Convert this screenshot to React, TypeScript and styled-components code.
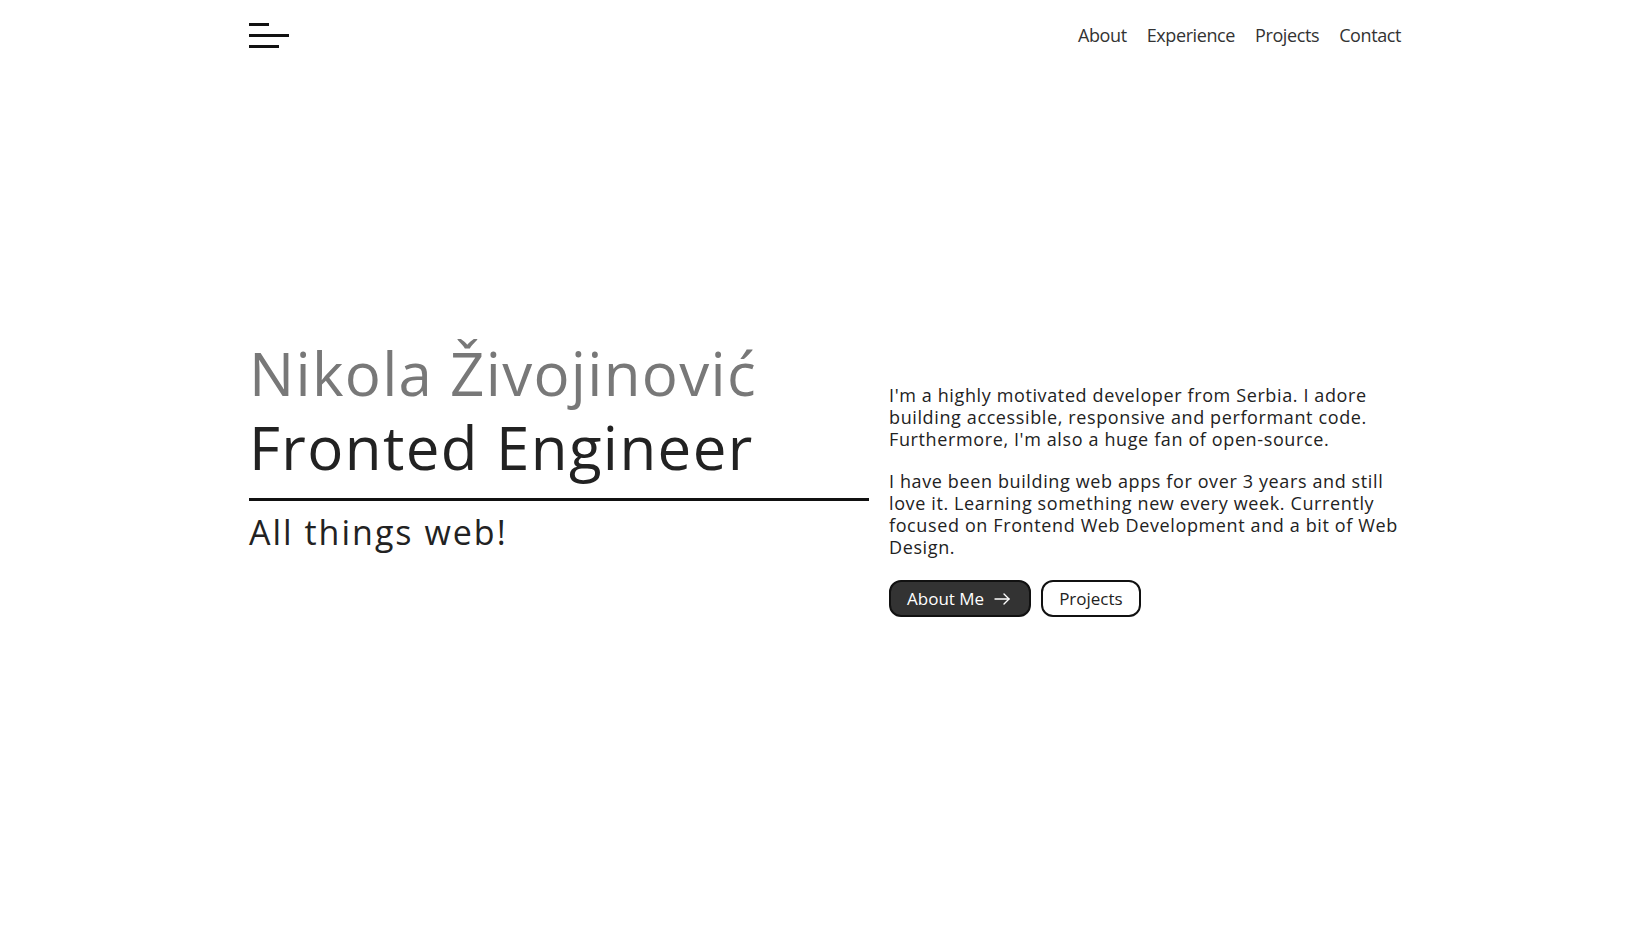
import styled, { createGlobalStyle } from 'styled-components';

const GlobalStyle = createGlobalStyle`
  * {
    box-sizing: border-box;
  }
  body {
    margin: 0;
    background: #fff;
    color: #222;
    font-family: 'Open Sans', 'Liberation Sans', sans-serif;
  }
`;

const _links = ['About', 'Experience', 'Projects', 'Contact'];

const ArrowIcon = () => (
  <svg width="16" height="12" viewBox="0 0 16 12" fill="none" stroke="currentColor" strokeWidth="1.4" strokeLinecap="round" strokeLinejoin="round">
    <path d="M1 6h14" />
    <path d="M10 1l5 5-5 5" />
  </svg>
);

export default function App() {
  return (
    <Page>
      <GlobalStyle />
      <Header>
        <MenuButton aria-label="menu">
          <Bar $width={20} />
          <Bar $width={40} />
          <Bar $width={30} />
        </MenuButton>
        <Nav>
          {_links.map((link) => (
            <NavLink key={link} href={`#${link.toLowerCase()}`}>
              {link}
            </NavLink>
          ))}
        </Nav>
      </Header>

      <Hero>
        <Intro>
          <Name>Nikola Živojinović</Name>
          <Role>Fronted Engineer</Role>
          <Divider />
          <Tagline>All things web!</Tagline>
        </Intro>
        <About>
          <Text>
            I'm a highly motivated developer from Serbia. I adore building accessible, responsive and performant code.
            Furthermore, I'm also a huge fan of open-source.
          </Text>
          <Text>
            I have been building web apps for over 3 years and still love it. Learning something new every week.
            Currently focused on Frontend Web Development and a bit of Web Design.
          </Text>
          <Actions>
            <Button $dark>
              About Me
              <ArrowIcon />
            </Button>
            <Button>Projects</Button>
          </Actions>
        </About>
      </Hero>
    </Page>
  );
}

const Page = styled.div`
  min-height: 100vh;
  display: flex;
  flex-direction: column;
`;

const Header = styled.header`
  width: 100%;
  max-width: 1152px;
  height: 70px;
  margin: 0 auto;
  display: flex;
  align-items: center;
  justify-content: space-between;
`;

const MenuButton = styled.button`
  display: flex;
  flex-direction: column;
  gap: 8px;
  padding: 0;
  border: none;
  background: none;
  cursor: pointer;
`;

const Bar = styled.span<{ $width: number }>`
  display: block;
  width: ${(p) => p.$width}px;
  height: 3px;
  background: #111;
`;

const Nav = styled.nav`
  display: flex;
  gap: 20px;
`;

const NavLink = styled.a`
  font-size: 18px;
  letter-spacing: -0.4px;
  color: #333;
  text-decoration: none;
  &:hover {
    color: #000;
  }
`;

const Hero = styled.main`
  width: 100%;
  max-width: 1152px;
  margin: 0 auto;
  padding-top: 266px;
  display: grid;
  grid-template-columns: 620px 1fr;
  column-gap: 20px;
  align-items: start;
`;

const Intro = styled.div`
  display: flex;
  flex-direction: column;
`;

const Name = styled.h1`
  margin: 0;
  font-size: 60px;
  font-weight: 400;
  line-height: 74px;
  letter-spacing: 1.3px;
  color: #787878;
`;

const Role = styled.h2`
  margin: 0;
  font-size: 60px;
  font-weight: 400;
  line-height: 74px;
  letter-spacing: 1.4px;
  color: #222;
`;

const Divider = styled.hr`
  width: 100%;
  height: 3px;
  margin: 14px 0 11px;
  border: none;
  background: #111;
`;

const Tagline = styled.p`
  margin: 0;
  font-size: 34px;
  line-height: 1.2;
  letter-spacing: 2px;
  color: #222;
`;

const About = styled.div`
  margin-top: 48px;
  display: flex;
  flex-direction: column;
`;

const Text = styled.p`
  margin: 0 -12px 20px 0;
  font-size: 18px;
  line-height: 22px;
  letter-spacing: 0.62px;
  color: #222;
  &:last-of-type {
    margin-bottom: 22px;
  }
`;

const Actions = styled.div`
  display: flex;
  gap: 10px;
`;

const Button = styled.button<{ $dark?: boolean }>`
  display: inline-flex;
  align-items: center;
  gap: 10px;
  height: 37px;
  padding: 0 16px;
  border: 2px solid #111;
  border-radius: 12px;
  font-family: inherit;
  font-size: 17px;
  font-weight: 500;
  letter-spacing: 0;
  background: ${(p) => (p.$dark ? '#333' : '#fff')};
  color: ${(p) => (p.$dark ? '#fff' : '#222')};
  cursor: pointer;
  svg {
    margin-right: 3px;
  }
`;
